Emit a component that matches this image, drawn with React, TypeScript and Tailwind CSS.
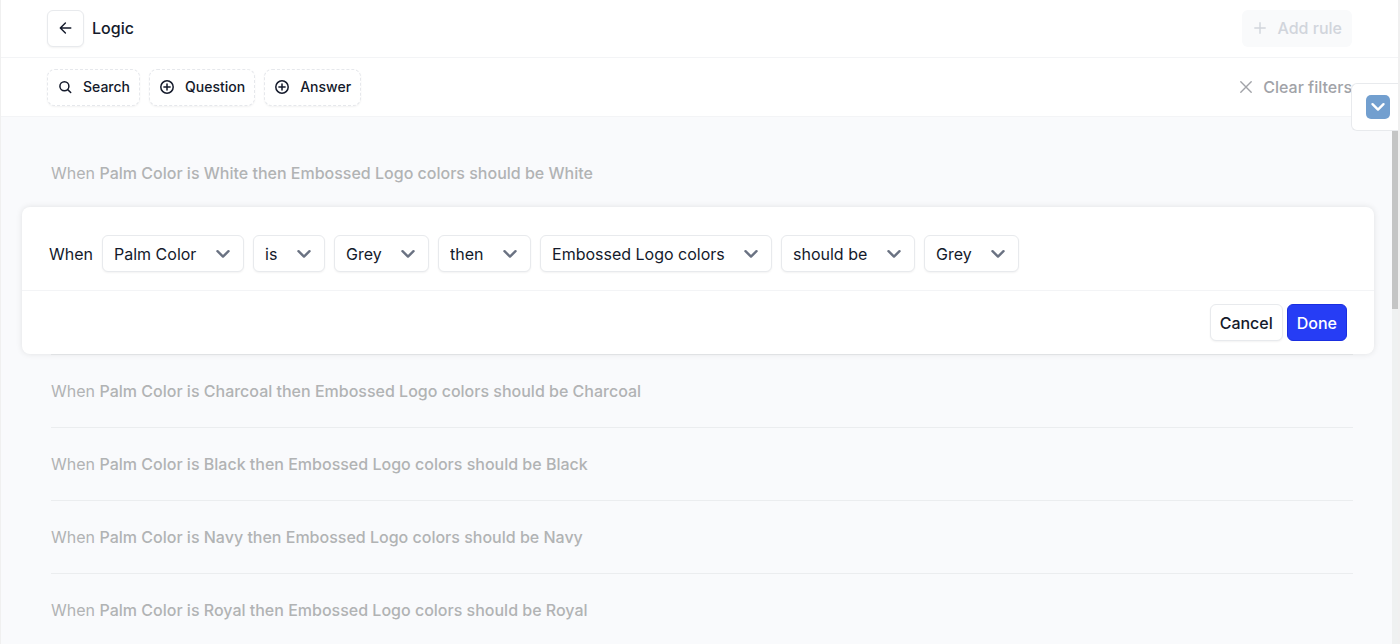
import { useState, type ReactNode } from "react";

type IconProps = { className?: string };

function ArrowLeftIcon({ className }: IconProps) {
  return (
    <svg viewBox="0 0 16 16" className={className} fill="none" stroke="currentColor" strokeWidth="1.4" strokeLinecap="round" strokeLinejoin="round" aria-hidden="true">
      <path d="M12.8 8H2.4M7.4 2.9 2.3 8l5.1 5.1" />
    </svg>
  );
}

function SearchIcon({ className }: IconProps) {
  return (
    <svg viewBox="0 0 16 16" className={className} fill="none" stroke="currentColor" strokeWidth="1.5" strokeLinecap="round" aria-hidden="true">
      <circle cx="7.4" cy="7.2" r="4.5" />
      <path d="m10.7 10.6 3 2.9" />
    </svg>
  );
}

function PlusCircleIcon({ className }: IconProps) {
  return (
    <svg viewBox="0 0 16 16" className={className} fill="none" stroke="currentColor" strokeWidth="1.5" strokeLinecap="round" aria-hidden="true">
      <circle cx="8" cy="8" r="6.2" />
      <path d="M8 4.9v6.2M4.9 8h6.2" />
    </svg>
  );
}

function PlusIcon({ className }: IconProps) {
  return (
    <svg viewBox="0 0 16 16" className={className} fill="none" stroke="currentColor" strokeWidth="1.4" strokeLinecap="round" aria-hidden="true">
      <path d="M8 2.8v10.4M2.8 8h10.4" />
    </svg>
  );
}

function CloseIcon({ className }: IconProps) {
  return (
    <svg viewBox="0 0 16 16" className={className} fill="none" stroke="currentColor" strokeWidth="1.4" strokeLinecap="round" aria-hidden="true">
      <path d="m2.8 2.8 10.4 10.4M13.2 2.8 2.8 13.2" />
    </svg>
  );
}

function ChevronDownIcon({ className }: IconProps) {
  return (
    <svg viewBox="0 0 16 16" className={className} fill="none" stroke="currentColor" strokeWidth="2.4" strokeLinecap="round" strokeLinejoin="round" aria-hidden="true">
      <path d="M2.5 5.2 8 10.6l5.5-5.4" />
    </svg>
  );
}

function FilterButton({ icon, children }: { icon: ReactNode; children: ReactNode }) {
  return (
    <button
      type="button"
      className="flex h-[37px] items-center gap-[10px] rounded-lg border border-dashed border-[#e6e8ec] bg-white px-[9px] text-sm font-medium shadow-xs"
    >
      {icon}
      {children}
    </button>
  );
}

function RuleSelect({ label, value }: { label: string; value: string }) {
  return (
    <div className="relative">
      <select
        aria-label={label}
        defaultValue={value}
        className="h-[37px] appearance-none rounded-md border border-[#e8eaed] bg-white pr-[46px] pl-[11px] text-base shadow-xs"
      >
        <option>{value}</option>
      </select>
      <ChevronDownIcon className="pointer-events-none absolute top-1/2 right-[13px] size-4 -translate-y-1/2 text-gray-500" />
    </div>
  );
}

const FIELDS = [
  { label: "Condition question", value: "Palm Color" },
  { label: "Condition operator", value: "is" },
  { label: "Condition answer", value: "Grey" },
  { label: "Connector", value: "then" },
  { label: "Target question", value: "Embossed Logo colors" },
  { label: "Target operator", value: "should be" },
  { label: "Target answer", value: "Grey" },
];

function RuleEditor({ onClose }: { onClose: () => void }) {
  return (
    <form
      className="-mt-[3px] -mr-[21px] -ml-[29px] rounded-lg bg-white shadow-[0_0_6px_rgba(0,0,0,0.1)]"
      onSubmit={(event) => {
        event.preventDefault();
        onClose();
      }}
    >
      <div className="flex flex-wrap items-center gap-[9px] border-b border-gray-100 px-[27px] pt-7 pb-[18px]">
        <span>When</span>
        {FIELDS.map((field) => (
          <RuleSelect key={field.label} {...field} />
        ))}
      </div>
      <div className="flex justify-end gap-1 px-[27px] py-[13px]">
        <button type="button" onClick={onClose} className="h-[37px] rounded-md border border-[#e8eaed] bg-white px-[9px] font-medium shadow-xs">
          Cancel
        </button>
        <button type="submit" className="h-[37px] rounded-md border border-[#1a2ee0] bg-[#263df5] px-[9px] font-medium text-white">
          Done
        </button>
      </div>
    </form>
  );
}

const COLORS = ["White", "Grey", "Charcoal", "Black", "Navy", "Royal"];

export default function App() {
  const [editing, setEditing] = useState<string | null>("Grey");

  return (
    <div className="relative flex h-screen flex-col overflow-hidden border-r-2 border-l border-[#f0f0f0] bg-white font-[Inter,sans-serif] text-base text-[#141a2b]">
      <header className="flex h-[58px] shrink-0 items-center border-b border-gray-100 px-[46px] pb-px">
        <button type="button" aria-label="Back" className="flex size-[37px] items-center justify-center rounded-md border border-[#e8eaed] bg-white shadow-xs">
          <ArrowLeftIcon className="size-4" />
        </button>
        <h1 className="ml-2 font-medium">Logic</h1>
        <button type="button" disabled className="ml-auto flex h-[37px] items-center gap-[9px] rounded-md bg-gray-50 px-[10px] font-medium text-gray-300">
          <PlusIcon className="size-4" />
          Add rule
        </button>
      </header>

      <div className="flex h-[59px] shrink-0 items-center gap-[9px] border-b border-gray-100 px-[46px]">
        <FilterButton icon={<SearchIcon className="size-4" />}>Search</FilterButton>
        <FilterButton icon={<PlusCircleIcon className="size-4" />}>Question</FilterButton>
        <FilterButton icon={<PlusCircleIcon className="size-4" />}>Answer</FilterButton>
        <button type="button" className="ml-auto flex items-center gap-[9px] font-medium text-[#a1a3a8]">
          <CloseIcon className="size-4" />
          Clear filters
        </button>
      </div>

      <main className="flex min-h-0 grow bg-[#f9fafc]">
        <ul className="min-w-0 grow overflow-hidden pt-5 pr-[39px] pl-[50px]">
          {COLORS.map((color) =>
            color === editing ? (
              <li key={color} className="border-b border-[#ebedef]">
                <RuleEditor onClose={() => setEditing(null)} />
              </li>
            ) : (
              <li key={color} className="flex h-[73px] items-center border-b border-[#ebedef] text-[#b1b3b4]">
                <p>
                  When{" "}
                  <span className="font-medium">
                    Palm Color is {color} then Embossed Logo colors should be {color}
                  </span>
                </p>
              </li>
            ),
          )}
        </ul>
        <div className="w-[6px] shrink-0 bg-[#eff1f1]" aria-hidden="true">
          <div className="h-[192px] bg-[#c4c5c5]" />
        </div>
      </main>

      <button
        type="button"
        aria-label="Collapse panel"
        className="absolute top-[83px] right-0 flex h-[48px] w-[47px] items-center justify-end rounded-l-md border border-r-0 border-[#e8eaed] bg-white pr-2"
      >
        <span className="flex size-6 items-center justify-center rounded-[5px] bg-[#729fcf] text-white">
          <ChevronDownIcon className="size-4" />
        </span>
      </button>
    </div>
  );
}
